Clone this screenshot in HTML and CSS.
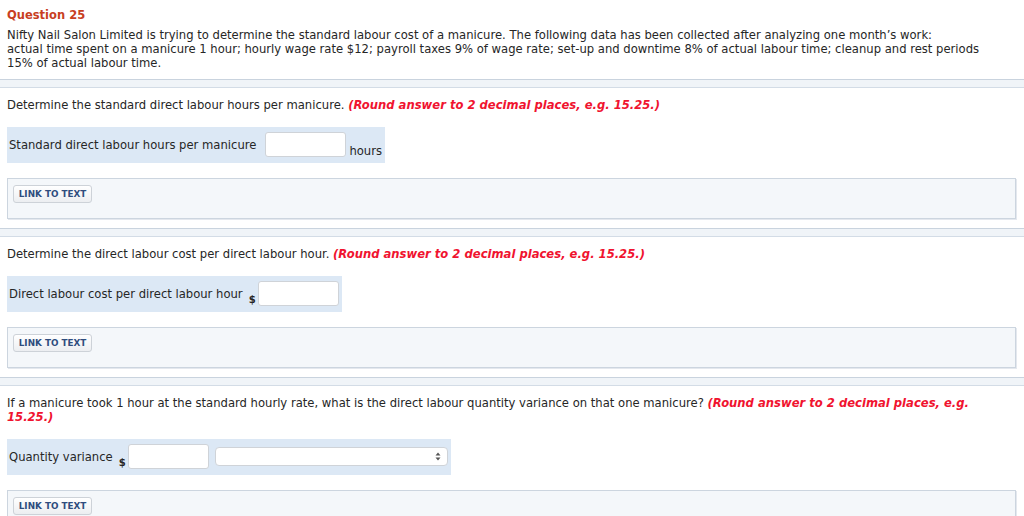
FILE: index.html
```html
<!DOCTYPE html>
<html lang="en">
<head>
<meta charset="utf-8">
<title>Question 25</title>
<link rel="stylesheet" href="styles.css">
</head>
<body>
<div class="intro">
  <h1 class="q-title">Question 25</h1>
  <p class="q-desc">Nifty Nail Salon Limited is trying to determine the standard labour cost of a manicure. The following data has been collected after analyzing one month’s work:<br>actual time spent on a manicure 1 hour; hourly wage rate $12; payroll taxes 9% of wage rate; set-up and downtime 8% of actual labour time; cleanup and rest periods<br>15% of actual labour time.</p>
</div>

<div class="sep"></div>
<section class="part">
  <p class="prompt">Determine the standard direct labour hours per manicure. <em class="hint">(Round answer to 2 decimal places, e.g. 15.25.)</em></p>
  <div class="answer">
    <span class="label">Standard direct labour hours per manicure</span>
    <input class="field" type="text">
    <span class="unit">hours</span>
  </div>
  <div class="links"><button class="link-btn">LINK TO TEXT</button></div>
</section>

<div class="sep"></div>
<section class="part">
  <p class="prompt">Determine the direct labour cost per direct labour hour. <em class="hint">(Round answer to 2 decimal places, e.g. 15.25.)</em></p>
  <div class="answer">
    <span class="label">Direct labour cost per direct labour hour</span>
    <span class="cur">$</span>
    <input class="field" type="text">
  </div>
  <div class="links"><button class="link-btn">LINK TO TEXT</button></div>
</section>

<div class="sep"></div>
<section class="part">
  <p class="prompt">If a manicure took 1 hour at the standard hourly rate, what is the direct labour quantity variance on that one manicure? <em class="hint">(Round answer to 2 decimal places, e.g.<br>15.25.)</em></p>
  <div class="answer">
    <span class="label">Quantity variance</span>
    <span class="cur">$</span>
    <input class="field" type="text">
    <span class="select">
      <svg class="arrows" width="6" height="9" viewBox="0 0 6 9"><path d="M3 0.5 L5.5 3.5 H0.5 Z M3 8.5 L5.5 5.5 H0.5 Z" fill="#555"/></svg>
    </span>
  </div>
  <div class="links"><button class="link-btn">LINK TO TEXT</button></div>
</section>
</body>
</html>
```
FILE: styles.css
```css
html, body {
  margin: 0;
  padding: 0;
  background: #ffffff;
}
body {
  font-family: "DejaVu Sans", Verdana, sans-serif;
  font-size: 11.6px;
  line-height: 14px;
  color: #262626;
}
.intro {
  padding: 8px 8px 9px 7px;
}
.q-title {
  margin: 0;
  font-size: 11.5px;
  line-height: 14px;
  font-weight: bold;
  color: #c8401f;
}
.q-desc {
  margin: 6px 0 0 0;
}
.sep {
  height: 7px;
  border-top: 1px solid #c9d3de;
  border-bottom: 1px solid #d3dce6;
  background: #f0f4f8;
}
.part {
  padding: 10px 8px 9px 7px;
}
.prompt {
  margin: 0;
}
.hint {
  font-weight: bold;
  font-style: italic;
  color: #f0132f;
}
.answer {
  display: inline-flex;
  align-items: center;
  margin-top: 15px;
  padding: 5px 3px 6px 2px;
  background: #dce8f5;
}
.label {
  margin-right: 9px;
}
.field {
  box-sizing: border-box;
  width: 81px;
  height: 25px;
  margin: 0;
  padding: 2px 4px;
  border: 1px solid #cfd3d8;
  border-radius: 3px;
  background: #fff;
  font: inherit;
}
.unit {
  align-self: flex-end;
  margin-left: 3px;
  line-height: 13px;
  margin-bottom: -1px;
}
.cur {
  align-self: flex-end;
  margin-left: -3px;
  font-weight: bold;
  font-size: 10px;
  line-height: 12px;
  margin-right: 2px;
}
.select {
  position: relative;
  box-sizing: border-box;
  width: 233px;
  height: 19px;
  margin-left: 6px;
  border: 1px solid #cfd3d8;
  border-radius: 4px;
  background: #fff;
}
.arrows {
  position: absolute;
  right: 6px;
  top: 4px;
}
.links {
  margin-top: 15px;
  padding: 6px 5px 15px 5px;
  background: #f4f7fa;
  border: 1px solid #ccd5df;
  box-shadow: 1px 1px 0 #e4e8ee;
}
.link-btn {
  display: block;
  box-sizing: border-box;
  height: 18px;
  width: 79px;
  padding: 0;
  border: 1px solid #cdd2d8;
  border-radius: 3px;
  background: linear-gradient(#ffffff, #eceef1);
  font-family: "DejaVu Sans", Verdana, sans-serif;
  font-weight: bold;
  font-size: 8.8px;
  color: #2f4d7e;
  text-align: center;
}
```
